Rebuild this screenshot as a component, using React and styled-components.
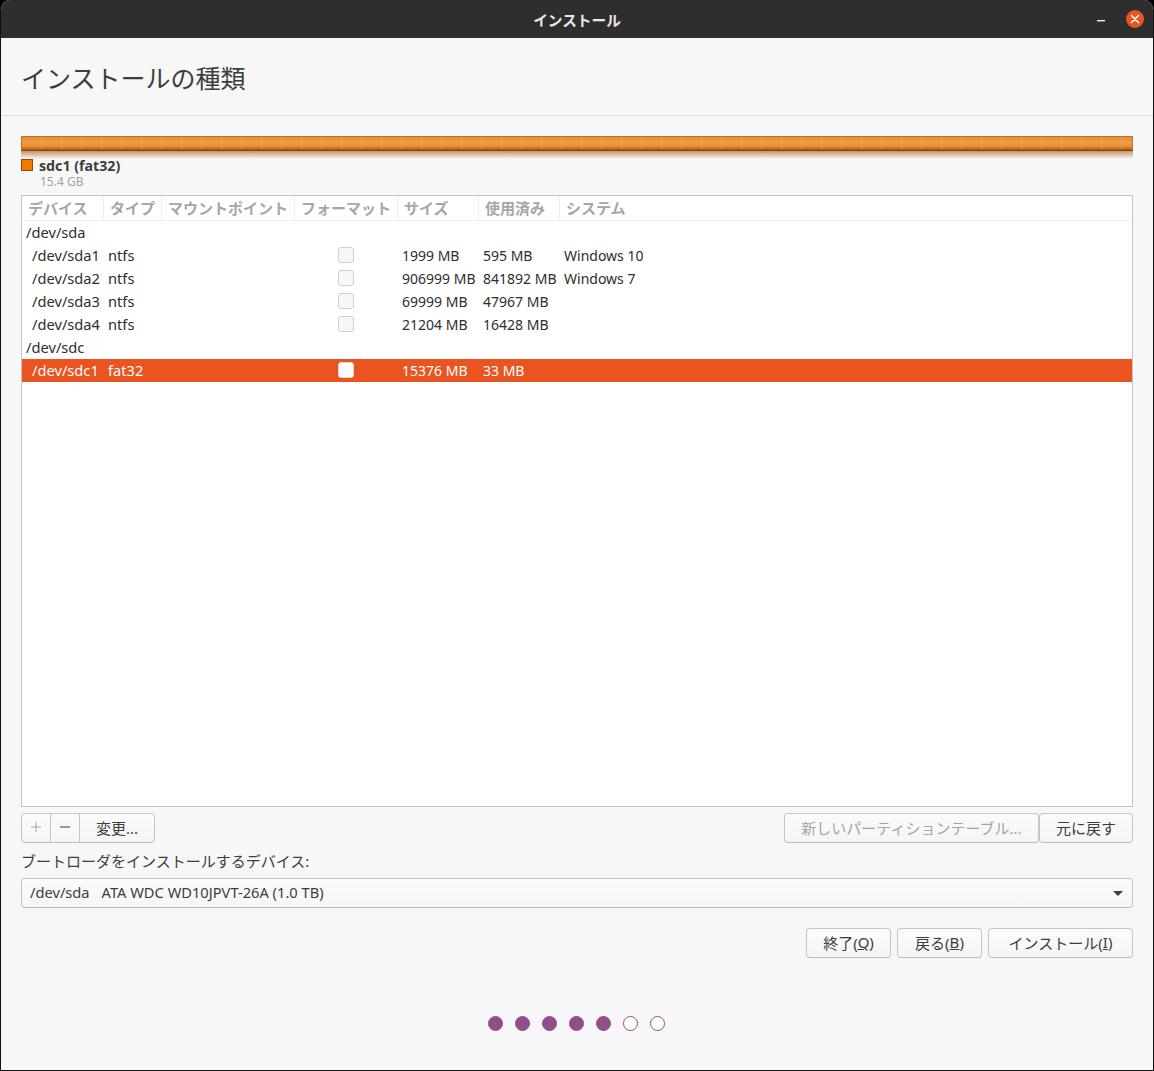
import React from "react";
import styled, { createGlobalStyle } from "styled-components";

const GlobalStyle = createGlobalStyle`
  html, body {
    margin: 0;
    background: #000;
  }
  body {
    font-family: "Noto Sans", "Noto Sans CJK JP", sans-serif;
    font-size: 14.67px;
    color: #3d3d3d;
  }
`;

const Window = styled.div`
  width: 1154px;
  height: 1071px;
  box-sizing: border-box;
  display: flex;
  flex-direction: column;
  background: #f7f7f7;
  border: 1px solid #111;
  border-top: 0;
  border-radius: 10px 10px 0 0;
  overflow: hidden;
`;

const TitleBar = styled.div`
  position: relative;
  height: 38px;
  flex: none;
  background: #2f2e2e;
  color: #e8e8e8;
  font-weight: 700;
  font-size: 14.67px;
  display: flex;
  align-items: center;
  justify-content: center;
`;

const WindowButtons = styled.div`
  position: absolute;
  right: 9px;
  top: 10px;
  display: flex;
  align-items: center;
  gap: 21px;
`;

const Minimize = styled.div`
  width: 8px;
  height: 1px;
  margin-top: 3px;
  background: #f0f0f0;
  box-shadow: 0 1px 0 rgba(240, 240, 240, 0.4);
`;

const Close = styled.div`
  width: 18px;
  height: 18px;
  border-radius: 50%;
  background: #e95420;
  display: flex;
  align-items: center;
  justify-content: center;
`;

const Header = styled.div`
  height: 78px;
  flex: none;
  box-sizing: border-box;
  border-bottom: 1px solid #dcdcdc;
  display: flex;
  align-items: center;
  padding-left: 20px;
  font-size: 25px;
  color: #3d3d3d;
`;

const Content = styled.div`
  flex: 1;
  padding: 20px 20px 0;
  display: flex;
  flex-direction: column;
`;

const PartitionBar = styled.div`
  position: relative;
  height: 15px;
  flex: none;
  box-sizing: border-box;
  border: 1px solid #b5742c;
  border-bottom-color: #7a4a16;
  background:
    repeating-linear-gradient(90deg, transparent 0 19px, rgba(255, 225, 180, 0.2) 19px 20px),
    linear-gradient(#e98c3a, #f39a3e 45%, #e88a2f 75%, #9a5a18);

  &::after {
    content: "";
    position: absolute;
    left: -1px;
    right: -1px;
    top: 14px;
    height: 8px;
    background: linear-gradient(rgba(180, 105, 40, 0.7), rgba(240, 180, 120, 0));
  }
`;

const Legend = styled.div`
  margin-top: 7px;
  height: 37px;
  flex: none;
  display: grid;
  grid-template-columns: 18px 1fr;
  align-content: start;
  align-items: center;
`;

const Swatch = styled.div`
  width: 12px;
  height: 12px;
  margin-top: -2px;
  box-sizing: border-box;
  background: #f57900;
  border: 1px solid #8a4d10;
`;

const LegendName = styled.div`
  font-weight: 700;
  font-size: 14.2px;
  line-height: 16px;
`;

const LegendSize = styled.div`
  grid-column: 2;
  margin-left: 1px;
  font-size: 12px;
  line-height: 15px;
  color: #a3a3a3;
`;

const Table = styled.div`
  height: 612px;
  flex: none;
  box-sizing: border-box;
  border: 1px solid #c4c4c4;
  background: #fff;
`;

const COLS = "82px 58px 133px 103px 81px 81px 1fr";

const HeadRow = styled.div`
  display: grid;
  grid-template-columns: ${COLS};
  height: 25px;
  box-sizing: border-box;
  border-bottom: 1px solid #f0f0f0;
`;

const HeadCell = styled.div`
  padding-left: 6px;
  border-right: 1px solid #efefef;
  font-weight: 700;
  font-size: 15px;
  line-height: 25px;
  color: #a6a6a6;
  white-space: nowrap;
  overflow: hidden;

  &:last-child {
    border-right: 0;
  }
`;

const Row = styled.div`
  display: grid;
  grid-template-columns: ${COLS};
  height: 23px;
  align-items: center;
  background: ${(p) => (p.$selected ? "#e95420" : "transparent")};
  color: ${(p) => (p.$selected ? "#fff" : "#2e2e2e")};
`;

const Cell = styled.div`
  padding-left: 4px;
  margin-bottom: 2px;
  white-space: nowrap;
`;

const NumberCell = styled(Cell)`
  margin-bottom: 0;
  font-size: 14px;
`;

const DeviceCell = styled(Cell)`
  padding-left: ${(p) => (p.$child ? "10px" : "4px")};
`;

const CheckCell = styled.div`
  display: flex;
  justify-content: center;
  padding: 0 1px 1px 0;
`;

const Check = styled.div`
  width: 16px;
  height: 16px;
  box-sizing: border-box;
  border-radius: 3px;
  border: 1px solid ${(p) => (p.$selected ? "#d8d8d8" : "#cfcfcf")};
  background: ${(p) => (p.$selected ? "#fff" : "#f7f7f7")};
`;

const ToolRow = styled.div`
  margin-top: 6px;
  height: 30px;
  flex: none;
  display: flex;
  justify-content: space-between;
`;

const Group = styled.div`
  display: flex;
`;

const Button = styled.div`
  height: 30px;
  box-sizing: border-box;
  padding-bottom: 2px;
  display: flex;
  align-items: center;
  justify-content: center;
  width: ${(p) => p.$w}px;
  margin-left: ${(p) => p.$ml || 0}px;
  border: 1px solid #c6c6c6;
  border-bottom-color: #bdbdbd;
  border-radius: ${(p) => p.$radius || "4px"};
  background: linear-gradient(#fbfbfb, #f5f5f5);
  color: ${(p) => (p.$disabled ? "#a5a5a5" : "#3d3d3d")};
  font-size: 15px;
  white-space: nowrap;
`;

const BootLabel = styled.div`
  margin-top: 8px;
  height: 20px;
  line-height: 20px;
  font-size: 15px;
  flex: none;
`;

const Select = styled.div`
  margin-top: 7px;
  height: 30px;
  flex: none;
  box-sizing: border-box;
  border: 1px solid #c6c6c6;
  border-bottom-color: #bdbdbd;
  border-radius: 4px;
  background: linear-gradient(#fbfbfb, #f6f6f6);
  display: flex;
  align-items: center;
  justify-content: space-between;
  padding: 0 9px 0 8px;
  color: #3d3d3d;
`;

const SelectValue = styled.div`
  display: flex;
  gap: 12px;
  padding-bottom: 2px;
`;

const Arrow = styled.div`
  width: 0;
  height: 0;
  border-left: 5px solid transparent;
  border-right: 5px solid transparent;
  border-top: 5px solid #3d3d3d;
`;

const ActionRow = styled.div`
  margin-top: 20px;
  display: flex;
  justify-content: flex-end;
  gap: 6px;
  flex: none;
`;

const Mnemonic = styled.span`
  text-decoration: underline;
`;

const Dots = styled.div`
  margin-top: 58px;
  padding-right: 2px;
  display: flex;
  justify-content: center;
  gap: 12px;
  flex: none;
`;

const Dot = styled.div`
  width: 15px;
  height: 15px;
  box-sizing: border-box;
  border-radius: 50%;
  border: 1px solid #924d8b;
  background: ${(p) => (p.$on ? "#924d8b" : "#fff")};
`;

const PlusIcon = () => (
  <svg width="10" height="10" viewBox="0 0 10 10">
    <path d="M0 5h10M5 0v10" stroke="#a5a5a5" strokeWidth="1" />
  </svg>
);

const MinusIcon = () => (
  <svg width="10" height="10" viewBox="0 0 10 10">
    <path d="M0 5h10" stroke="#3d3d3d" strokeWidth="1" />
  </svg>
);

const columns = ["デバイス", "タイプ", "マウントポイント", "フォーマット", "サイズ", "使用済み", "システム"];

const rows = [
  { device: "/dev/sda" },
  { device: "/dev/sda1", type: "ntfs", size: "1999 MB", used: "595 MB", system: "Windows 10" },
  { device: "/dev/sda2", type: "ntfs", size: "906999 MB", used: "841892 MB", system: "Windows 7" },
  { device: "/dev/sda3", type: "ntfs", size: "69999 MB", used: "47967 MB" },
  { device: "/dev/sda4", type: "ntfs", size: "21204 MB", used: "16428 MB" },
  { device: "/dev/sdc" },
  { device: "/dev/sdc1", type: "fat32", size: "15376 MB", used: "33 MB", selected: true },
];

const App = () => (
  <>
    <GlobalStyle />
    <Window>
      <TitleBar>
        インストール
        <WindowButtons>
          <Minimize />
          <Close>
            <svg width="10" height="10" viewBox="0 0 10 10">
              <path d="M1.5 1.5l7 7M8.5 1.5l-7 7" stroke="#fff" strokeWidth="1.5" strokeLinecap="round" />
            </svg>
          </Close>
        </WindowButtons>
      </TitleBar>
      <Header>インストールの種類</Header>
      <Content>
        <PartitionBar />
        <Legend>
          <Swatch />
          <LegendName>sdc1 (fat32)</LegendName>
          <LegendSize>15.4 GB</LegendSize>
        </Legend>
        <Table>
          <HeadRow>
            {columns.map((c) => (
              <HeadCell key={c}>{c}</HeadCell>
            ))}
          </HeadRow>
          {rows.map((r) => (
            <Row key={r.device} $selected={r.selected}>
              <DeviceCell $child={!!r.type}>{r.device}</DeviceCell>
              <Cell>{r.type}</Cell>
              <Cell />
              <CheckCell>{r.type && <Check $selected={r.selected} />}</CheckCell>
              <NumberCell>{r.size}</NumberCell>
              <NumberCell>{r.used}</NumberCell>
              <NumberCell>{r.system}</NumberCell>
            </Row>
          ))}
        </Table>
        <ToolRow>
          <Group>
            <Button $w={30} $radius="4px 0 0 4px">
              <PlusIcon />
            </Button>
            <Button $w={30} $ml={-1} $radius="0">
              <MinusIcon />
            </Button>
            <Button $w={76} $ml={-1} $radius="0 4px 4px 0">
              変更...
            </Button>
          </Group>
          <Group>
            <Button $w={255} $disabled>
              新しいパーティションテーブル...
            </Button>
            <Button $w={94}>元に戻す</Button>
          </Group>
        </ToolRow>
        <BootLabel>ブートローダをインストールするデバイス:</BootLabel>
        <Select>
          <SelectValue>
            <span>/dev/sda</span>
            <span>ATA WDC WD10JPVT-26A (1.0 TB)</span>
          </SelectValue>
          <Arrow />
        </Select>
        <ActionRow>
          <Button $w={85}>
            終了(<Mnemonic>Q</Mnemonic>)
          </Button>
          <Button $w={85}>
            戻る(<Mnemonic>B</Mnemonic>)
          </Button>
          <Button $w={145}>
            インストール(<Mnemonic>I</Mnemonic>)
          </Button>
        </ActionRow>
        <Dots>
          {[1, 1, 1, 1, 1, 0, 0].map((on, i) => (
            <Dot key={i} $on={!!on} />
          ))}
        </Dots>
      </Content>
    </Window>
  </>
);

export default App;
